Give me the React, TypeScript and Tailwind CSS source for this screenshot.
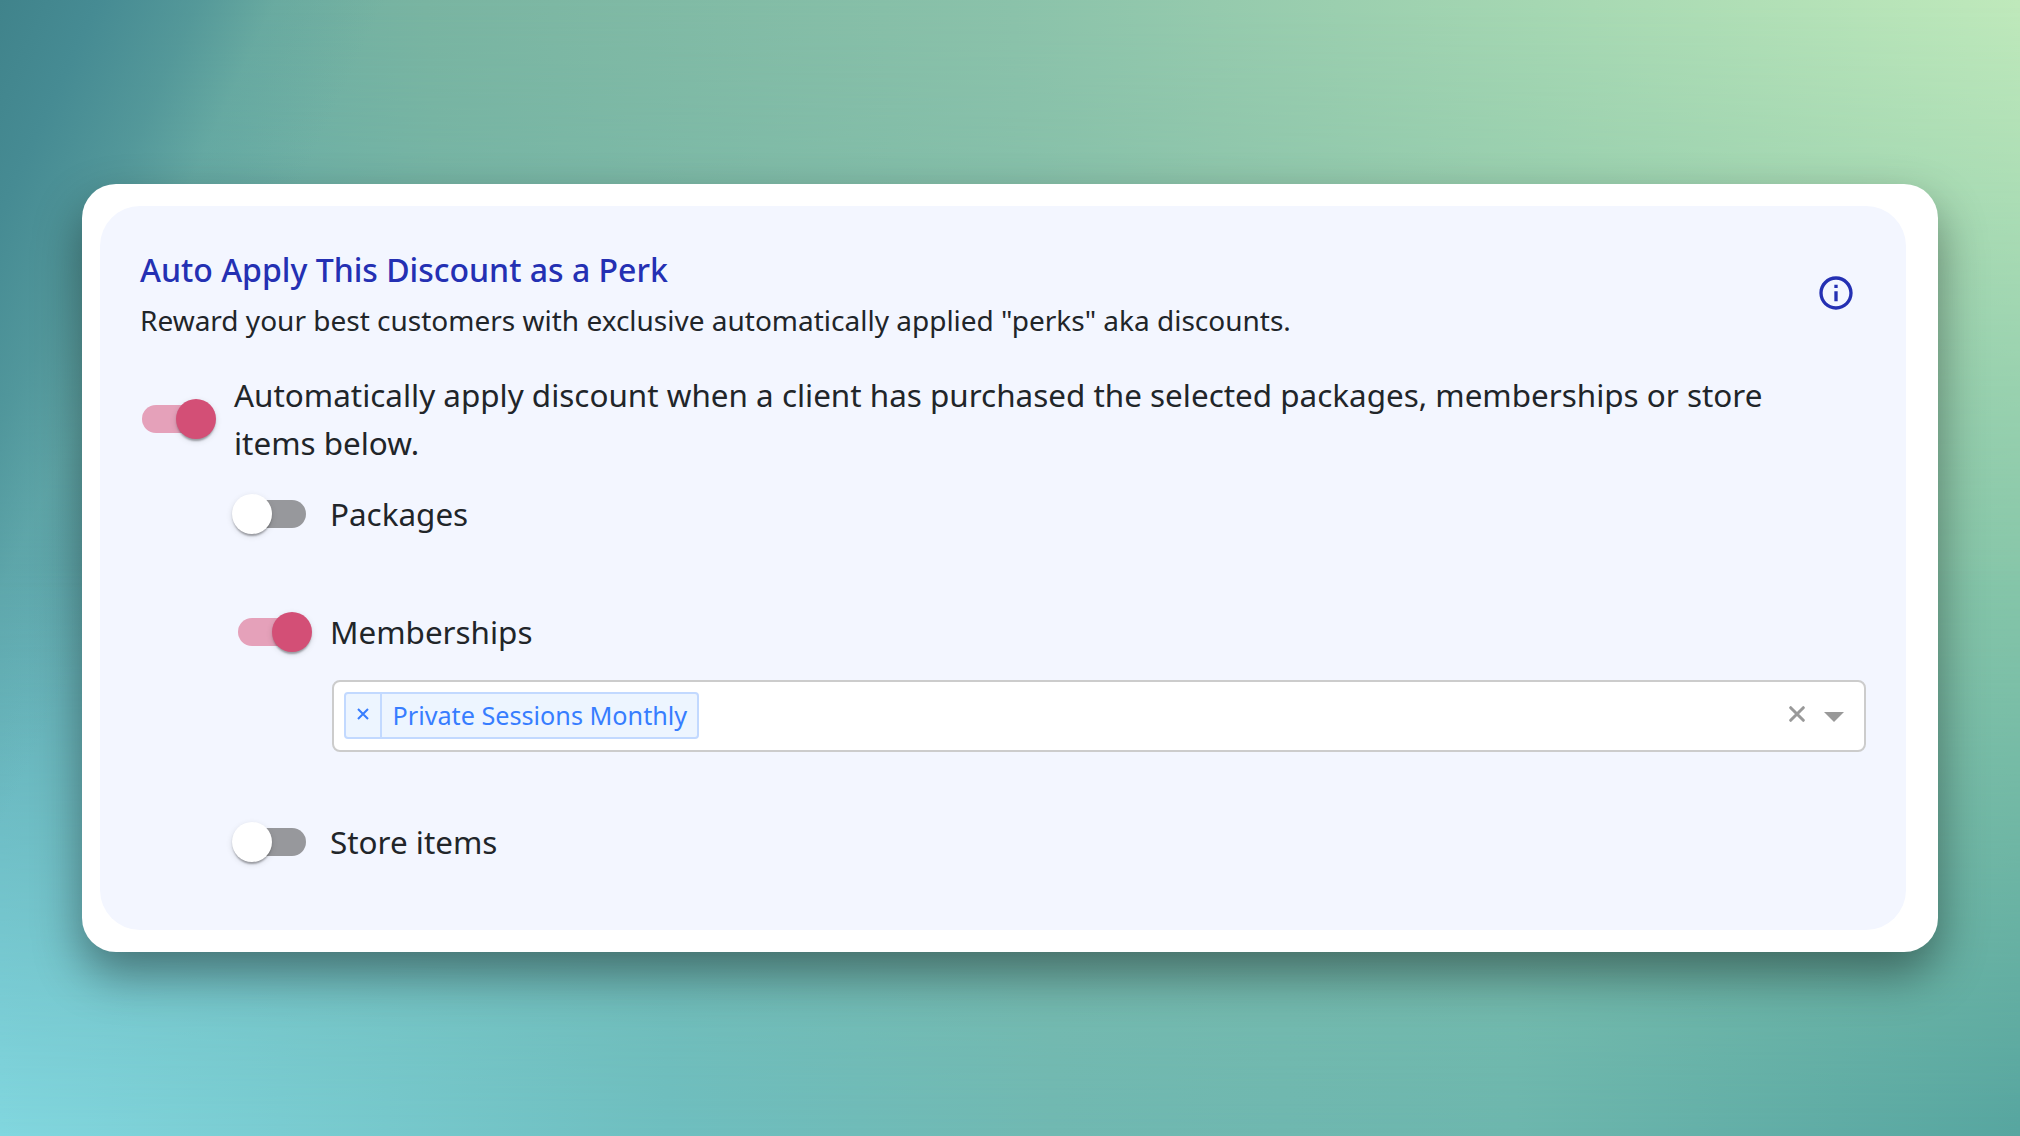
import { useState } from 'react';

interface SwitchProps {
  checked: boolean;
  onChange: () => void;
}

function Switch({ checked, onChange }: SwitchProps) {
  return (
    <button
      type="button"
      role="switch"
      aria-checked={checked}
      onClick={onChange}
      className="relative flex h-[76px] w-[116px] shrink-0 items-center px-6"
    >
      <span className={`h-7 w-full rounded-full ${checked ? 'bg-[#e5a1ba]' : 'bg-[#97989c]'}`} />
      <span
        className={`absolute top-[18px] h-10 w-10 rounded-full shadow-[0_4px_2px_-2px_rgba(0,0,0,0.2),0_2px_2px_rgba(0,0,0,0.14),0_2px_6px_rgba(0,0,0,0.12)] ${
          checked ? 'left-[58px] bg-[#d34f76]' : 'left-[18px] bg-white'
        }`}
      />
    </button>
  );
}

function InfoIcon() {
  return (
    <svg viewBox="0 0 24 24" className="h-10 w-10" fill="#2430b3">
      <path d="M11 7h2v2h-2zm0 4h2v6h-2zm1-9C6.48 2 2 6.48 2 12s4.48 10 10 10 10-4.48 10-10S17.52 2 12 2zm0 18c-4.41 0-8-3.59-8-8s3.59-8 8-8 8 3.59 8 8-3.59 8-8 8z" />
    </svg>
  );
}

function Backdrop() {
  return (
    <div className="absolute inset-0 bg-[linear-gradient(90deg,#82d7df_0%,#6fbfc0_33%,#71b9b2_52%,#6db7ae_75%,#57a6a0_100%)]">
      <div className="absolute inset-0 bg-[linear-gradient(90deg,#5fa9b1_0%,#6fb5ac_20%,#80bda8_60%,#86c6a9_100%)] [mask-image:linear-gradient(180deg,#000_50%,transparent_100%)]" />
      <div className="absolute inset-0 bg-[linear-gradient(86deg,#5ea3a3_0%,#6cada2_14%,#79b4a1_24%,#8bc2aa_52%,#a5d7b2_77%,#bfe9bb_100%)] [mask-image:linear-gradient(180deg,#000_0%,transparent_52%)]" />
      <div className="absolute inset-0 bg-[linear-gradient(115deg,#40838b_0px,#468b93_90px,rgb(75_144_149/0.7)_180px,rgb(90_158_155/0.3)_250px,rgb(100_168_160/0)_350px)]" />
    </div>
  );
}

export default function App() {
  const [enabled, setEnabled] = useState(true);
  const [packages, setPackages] = useState(false);
  const [memberships, setMemberships] = useState(true);
  const [storeItems, setStoreItems] = useState(false);

  return (
    <div className="relative flex h-[1136px] w-[2020px] items-center justify-center overflow-hidden font-['Noto_Sans',sans-serif] text-[31.42px] leading-[48px] text-[#212529]">
      <Backdrop />
      <div className="relative h-[768px] w-[1856px] rounded-[34px] bg-white py-[22px] pr-8 pl-[18px] shadow-[0_22px_48px_rgba(0,0,0,0.42)]">
        <div className="h-full rounded-[40px] bg-[#f3f6ff] p-10">
          <div className="flex justify-between">
            <div>
              <h2 className="text-[32px] font-medium text-[#2430b3]">Auto Apply This Discount as a Perk</h2>
              <p className="mt-[5px] text-[28px] leading-[42px]">
                Reward your best customers with exclusive automatically applied "perks" aka discounts.
              </p>
            </div>
            <div className="pt-[26.5px] pr-[9.6px]">
              <InfoIcon />
            </div>
          </div>

          <div className="mt-[30px] -ml-[22px] flex items-center pr-8">
            <Switch checked={enabled} onChange={() => setEnabled(!enabled)} />
            <p>
              Automatically apply discount when a client has purchased the selected packages, memberships or store
              items below.
            </p>
          </div>

          <div className="mt-[9px] ml-[74px]">
            <div className="flex items-center">
              <Switch checked={packages} onChange={() => setPackages(!packages)} />
              <span>Packages</span>
            </div>

            <div className="mt-[42px] flex items-center">
              <Switch checked={memberships} onChange={() => setMemberships(!memberships)} />
              <span>Memberships</span>
            </div>

            <div className="mt-[10px] ml-[118px] flex h-[72px] items-center justify-between rounded-lg border-2 border-[#ccc] bg-white pr-5 pl-[10px]">
              <div className="mb-px flex h-[47px] items-stretch rounded-[4px] border-2 border-[#c2d9ff] bg-[#edf5ff] text-[25.2px] leading-[43px] text-[#377dff]">
                <button type="button" className="flex w-9 items-center justify-center border-r-2 border-[#c2d9ff]">
                  <svg viewBox="0 0 12 12" className="-mt-[3px] h-3 w-3" stroke="currentColor" strokeWidth="2">
                    <path d="M1 1l10 10M11 1L1 11" />
                  </svg>
                </button>
                <span className="pr-[10px] pl-[10.5px]">Private Sessions Monthly</span>
              </div>
              <div className="flex items-center gap-[19px]">
                <svg viewBox="0 0 16 16" className="-mt-1 h-4 w-4" stroke="#999" strokeWidth="3" strokeLinecap="round">
                  <path d="M1.7 1.7l12.6 12.6M14.3 1.7L1.7 14.3" />
                </svg>
                <span className="mt-[2px] border-x-10 border-t-10 border-x-transparent border-t-[#999]" />
              </div>
            </div>

            <div className="mt-[52px] flex items-center">
              <Switch checked={storeItems} onChange={() => setStoreItems(!storeItems)} />
              <span>Store items</span>
            </div>
          </div>
        </div>
      </div>
    </div>
  );
}
